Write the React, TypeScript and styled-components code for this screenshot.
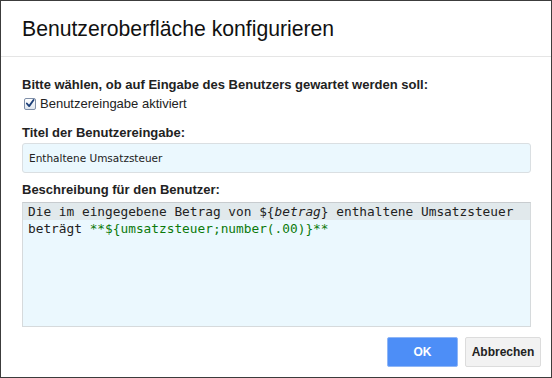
import { FC } from 'react'
import styled, { createGlobalStyle } from 'styled-components'

const GlobalStyle = createGlobalStyle`
  html, body {
    margin: 0;
    padding: 0;
    background: #ffffff;
  }
  body {
    font-family: 'Liberation Sans', Arial, sans-serif;
    color: #222222;
  }
`

const StyledDialog = styled.div`
  box-sizing: border-box;
  width: 552px;
  height: 378px;
  border: 1px solid #3c3c3c;
  background: #ffffff;
  display: flex;
  flex-direction: column;
`

const StyledHeader = styled.div`
  height: 55px;
  border-bottom: 1px solid #e5e5e5;
  display: flex;
  align-items: center;
  padding: 0 21px;
`

const Title = styled.h1`
  margin: 0;
  font-size: 21.2px;
  font-weight: normal;
  color: #111111;
`

const StyledBody = styled.div`
  display: flex;
  flex-direction: column;
  padding: 20px 21px 0 21px;
`

const Label = styled.div`
  font-size: 13px;
  font-weight: bold;
  color: #222222;
  line-height: 15px;
`

const CheckRow = styled.label`
  display: flex;
  align-items: center;
  gap: 4px;
  font-size: 13px;
  line-height: 15px;
  margin-top: 4px;
  padding-left: 2px;
`

const CheckBox = styled.span`
  width: 12px;
  height: 12px;
  box-sizing: border-box;
  border: 1px solid #7f8fa8;
  border-radius: 2px;
  background: linear-gradient(#ffffff, #dfe6ef);
  display: flex;
  align-items: center;
  justify-content: center;
`

const Field = styled.div<{ $top: number; $gap: number }>`
  margin-top: ${(p) => p.$top}px;
  display: flex;
  flex-direction: column;
  gap: ${(p) => p.$gap}px;
`

const TextInput = styled.div`
  box-sizing: border-box;
  height: 30px;
  width: 509px;
  background: #ebf8fe;
  border: 1px solid #dadfe2;
  border-radius: 3px;
  display: flex;
  align-items: center;
  padding-left: 6px;
  font-family: 'DejaVu Sans', Verdana, sans-serif;
  font-size: 10.5px;
  color: #222222;
`

const TextArea = styled.div`
  box-sizing: border-box;
  height: 125px;
  width: 509px;
  background: #ebf8fe;
  border: 1px solid #d6dadc;
  border-top-color: #c8cccf;
  font-family: 'DejaVu Sans Mono', 'Liberation Mono', monospace;
  font-size: 12.8px;
  line-height: 17px;
  color: #222222;
`

const CodeLine = styled.div<{ $active?: boolean }>`
  padding-left: 5px;
  white-space: pre;
  background: ${(p) => (p.$active ? '#e1e9ec' : 'transparent')};
`

const Var = styled.span`
  font-style: italic;
`

const Green = styled.span`
  color: #0b7a0b;
`

const StyledFooter = styled.div`
  display: flex;
  justify-content: flex-end;
  gap: 7px;
  padding: 10px 10px 0 0;
`

const Button = styled.button<{ $primary?: boolean }>`
  box-sizing: border-box;
  height: 30px;
  padding: 0;
  width: ${(p) => (p.$primary ? 71 : 76)}px;
  border-radius: 2px;
  font-family: 'Liberation Sans', Arial, sans-serif;
  font-size: 12px;
  font-weight: bold;
  color: ${(p) => (p.$primary ? '#ffffff' : '#222222')};
  background: ${(p) => (p.$primary ? '#4d8ef7' : '#f2f2f2')};
  border: 1px solid ${(p) => (p.$primary ? '#8fb6f6' : '#dcdcdc')};
`

const CheckIcon: FC = () => (
  <svg width="11" height="11" viewBox="0 0 11 11">
    <path
      d="M2 5.5 L4.6 8.4 L9.4 1.6"
      fill="none"
      stroke="#1c3f78"
      strokeWidth="2"
      strokeLinecap="round"
      strokeLinejoin="round"
    />
  </svg>
)

const App: FC = () => {
  return (
    <>
      <GlobalStyle />
      <StyledDialog>
        <StyledHeader>
          <Title>Benutzeroberfläche konfigurieren</Title>
        </StyledHeader>
        <StyledBody>
          <Label>Bitte wählen, ob auf Eingabe des Benutzers gewartet werden soll:</Label>
          <CheckRow>
            <CheckBox>
              <CheckIcon />
            </CheckBox>
            Benutzereingabe aktiviert
          </CheckRow>
          <Field $top={14} $gap={3}>
            <Label>Titel der Benutzereingabe:</Label>
            <TextInput>Enthaltene Umsatzsteuer</TextInput>
          </Field>
          <Field $top={9} $gap={5}>
            <Label>Beschreibung für den Benutzer:</Label>
            <TextArea>
              <CodeLine $active>
                Die im eingegebene Betrag von ${'{'}<Var>betrag</Var>
                {'}'} enthaltene Umsatzsteuer
              </CodeLine>
              <CodeLine>
                beträgt <Green>**${'{'}umsatzsteuer;number(.00){'}'}**</Green>
              </CodeLine>
            </TextArea>
          </Field>
        </StyledBody>
        <StyledFooter>
          <Button $primary>OK</Button>
          <Button>Abbrechen</Button>
        </StyledFooter>
      </StyledDialog>
    </>
  )
}

export default App
